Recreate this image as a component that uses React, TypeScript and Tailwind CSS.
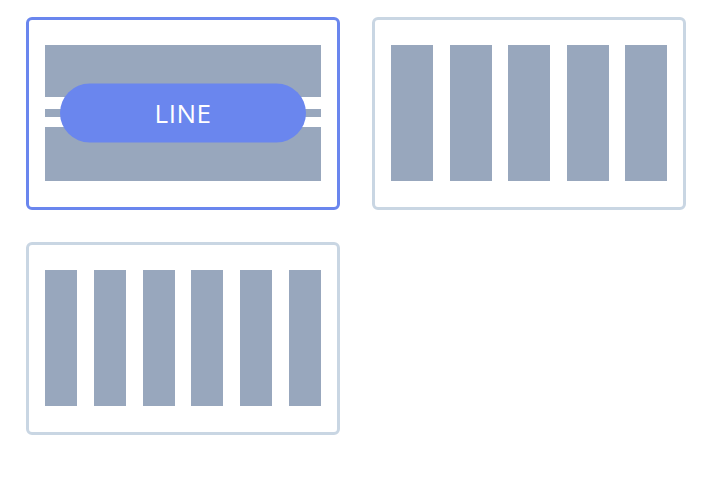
import React from 'react'

type Layout = {
  id: string
  bars?: number
  selected?: boolean
}

const layouts: Layout[] = [
  { id: 'line', selected: true },
  { id: 'five', bars: 5 },
  { id: 'six', bars: 6 },
]

function LinePreview() {
  return (
    <div className="relative h-[136px] w-full">
      <div className="flex h-full flex-col">
        <div className="h-[52px] bg-[#98a7bd]" />
        <div className="mt-[12px] h-[8px] bg-[#98a7bd]" />
        <div className="mt-[10px] flex-1 bg-[#98a7bd]" />
      </div>
      <div className="absolute left-1/2 top-1/2 flex h-[59px] w-[246px] -translate-x-1/2 -translate-y-1/2 items-center justify-center rounded-full bg-[#6a86ee]">
        <span className="text-[26px] tracking-[0.5px] text-white" style={{ fontFamily: '"Open Sans", "Noto Sans", sans-serif' }}>
          LINE
        </span>
      </div>
    </div>
  )
}

function BarsPreview({ count }: { count: number }) {
  const barWidth = count === 5 ? 'w-[42px]' : 'w-[32px]'
  return (
    <div className="flex h-[136px] w-full justify-between">
      {Array.from({ length: count }).map((_, i) => (
        <div key={i} className={`h-full ${barWidth} bg-[#98a7bd]`} />
      ))}
    </div>
  )
}

export default function App() {
  return (
    <div className="min-h-screen bg-white pl-[26px] pt-[17px]">
      <div className="grid grid-cols-[314px_314px] gap-8">
        {layouts.map((l) => (
          <div
            key={l.id}
            className={`flex h-[193px] w-[314px] items-start rounded-md border-[3px] bg-white px-4 pt-[25px] ${
              l.selected ? 'border-[#6a86ee]' : 'border-[#c9d6e3]'
            }`}
          >
            {l.bars ? <BarsPreview count={l.bars} /> : <LinePreview />}
          </div>
        ))}
      </div>
    </div>
  )
}
